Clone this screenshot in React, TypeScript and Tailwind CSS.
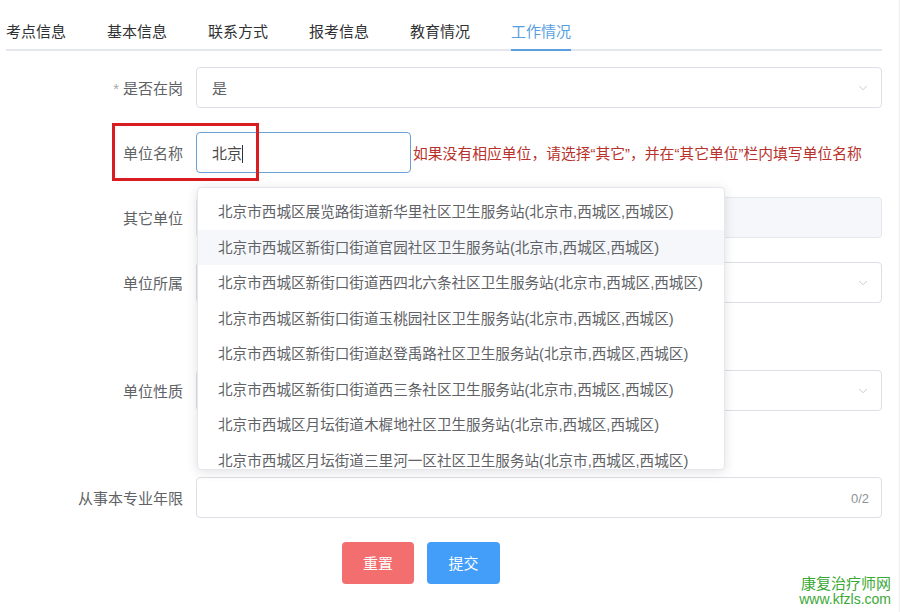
import { ChevronDown } from "lucide-react";

const TABS = ["考点信息", "基本信息", "联系方式", "报考信息", "教育情况", "工作情况"];

const OPTIONS = [
  "北京市西城区展览路街道新华里社区卫生服务站(北京市,西城区,西城区)",
  "北京市西城区新街口街道官园社区卫生服务站(北京市,西城区,西城区)",
  "北京市西城区新街口街道西四北六条社区卫生服务站(北京市,西城区,西城区)",
  "北京市西城区新街口街道玉桃园社区卫生服务站(北京市,西城区,西城区)",
  "北京市西城区新街口街道赵登禹路社区卫生服务站(北京市,西城区,西城区)",
  "北京市西城区新街口街道西三条社区卫生服务站(北京市,西城区,西城区)",
  "北京市西城区月坛街道木樨地社区卫生服务站(北京市,西城区,西城区)",
  "北京市西城区月坛街道三里河一区社区卫生服务站(北京市,西城区,西城区)",
];

function Label({ children }: { children: React.ReactNode }) {
  return <div className="w-[196px] shrink-0 pr-[13px] pt-[4px] text-right text-[#606266]">{children}</div>;
}

function Select({ value }: { value?: string }) {
  return (
    <div className="flex-1 h-[41px] border border-[#dcdfe6] rounded-[4px] flex items-center pl-[15px] pr-[11px] pt-[3px] text-[#606266]">
      <span className="flex-1">{value}</span>
      <ChevronDown className="w-[14px] h-[14px] text-[#c0c4cc] -mt-[3px]" strokeWidth={1.5} />
    </div>
  );
}

export default function App() {
  return (
    <div
      className="w-[900px] h-[612px] bg-white relative overflow-hidden border-r border-[#eeeeee] text-[15px]"
      style={{ fontFamily: '"Liberation Sans", "Noto Sans CJK SC", sans-serif' }}
    >
      {/* tabs */}
      <div className="ml-[6px] w-[876px] h-[51px] flex border-b-2 border-[#e4e7ed]">
        {TABS.map((t, i) => (
          <div key={t} className="w-[101px] flex">
            <span
              className={`flex items-center pt-[16px] -mb-[2px] border-b-2 ${
                i === 5 ? "border-[#5a9fe0] text-[#5a9fe0]" : "border-transparent text-[#303133]"
              }`}
            >
              {t}
            </span>
          </div>
        ))}
      </div>

      {/* form */}
      <div className="w-[882px] mt-[16px]">
        <div className="flex items-center h-[41px]">
          <Label>
            <span className="text-[#aaaaaa] mr-[4px]">*</span>是否在岗
          </Label>
          <Select value="是" />
        </div>

        <div className="flex items-center h-[41px] mt-[24px]">
          <Label>单位名称</Label>
          <div className="w-[215px] h-[41px] border border-[#6a9fd6] rounded-[4px] flex items-center pl-[15px] pt-[3px] text-[#4a4a4a]">
            北京<span className="w-px h-[18px] bg-[#303133]" />
          </div>
          <span className="ml-[2px] pt-[3px] text-[14.8px] text-[#b8312b] whitespace-nowrap">
            如果没有相应单位，请选择“其它”，并在“其它单位”栏内填写单位名称
          </span>
        </div>

        <div className="flex items-center h-[41px] mt-[24px]">
          <Label>其它单位</Label>
          <div className="flex-1 h-[41px] border border-[#e4e7ed] bg-[#f5f7fa] rounded-[4px]" />
        </div>

        <div className="flex items-center h-[41px] mt-[24px]">
          <Label>单位所属</Label>
          <Select />
        </div>

        <div className="flex items-center h-[41px] mt-[67px]">
          <Label>单位性质</Label>
          <Select />
        </div>

        <div className="flex items-center h-[41px] mt-[66px]">
          <Label>从事本专业年限</Label>
          <div className="flex-1 h-[41px] border border-[#dcdfe6] rounded-[4px] flex items-center justify-end pr-[12px] pt-[3px] text-[13px] text-[#909399]">
            0/2
          </div>
        </div>

        <div className="flex gap-[13px] ml-[342px] mt-[24px]">
          <button className="w-[72px] h-[42px] rounded-[4px] bg-[#f36f6f] text-white pt-[3px]">重置</button>
          <button className="w-[73px] h-[42px] rounded-[4px] bg-[#429ef8] text-white pt-[3px]">提交</button>
        </div>
      </div>

      {/* annotation box */}
      <div className="absolute left-[112px] top-[123px] w-[147px] h-[58px] border-[3px] border-[#d91c1f]" />

      {/* autocomplete dropdown */}
      <div className="absolute left-[197px] top-[187px] w-[528px] h-[283px] bg-white border border-[#e4e7ed] rounded-[4px] shadow-[0_2px_12px_rgba(0,0,0,0.12)] overflow-hidden pt-[6px]">
        {OPTIONS.map((o, i) => (
          <div
            key={o}
            className={`h-[35.5px] flex items-center pl-[20px] pt-[3px] text-[14.6px] text-[#606266] whitespace-nowrap ${i === 1 ? "bg-[#f5f7fa]" : ""}`}
          >
            {o}
          </div>
        ))}
      </div>

      {/* watermark */}
      <div className="absolute right-[8px] top-[576px] text-right text-[#3aa935]">
        <div className="text-[15px] leading-[16px]">康复治疗师网</div>
        <div className="text-[14px] leading-[15px]">www.kfzls.com</div>
      </div>
    </div>
  );
}
